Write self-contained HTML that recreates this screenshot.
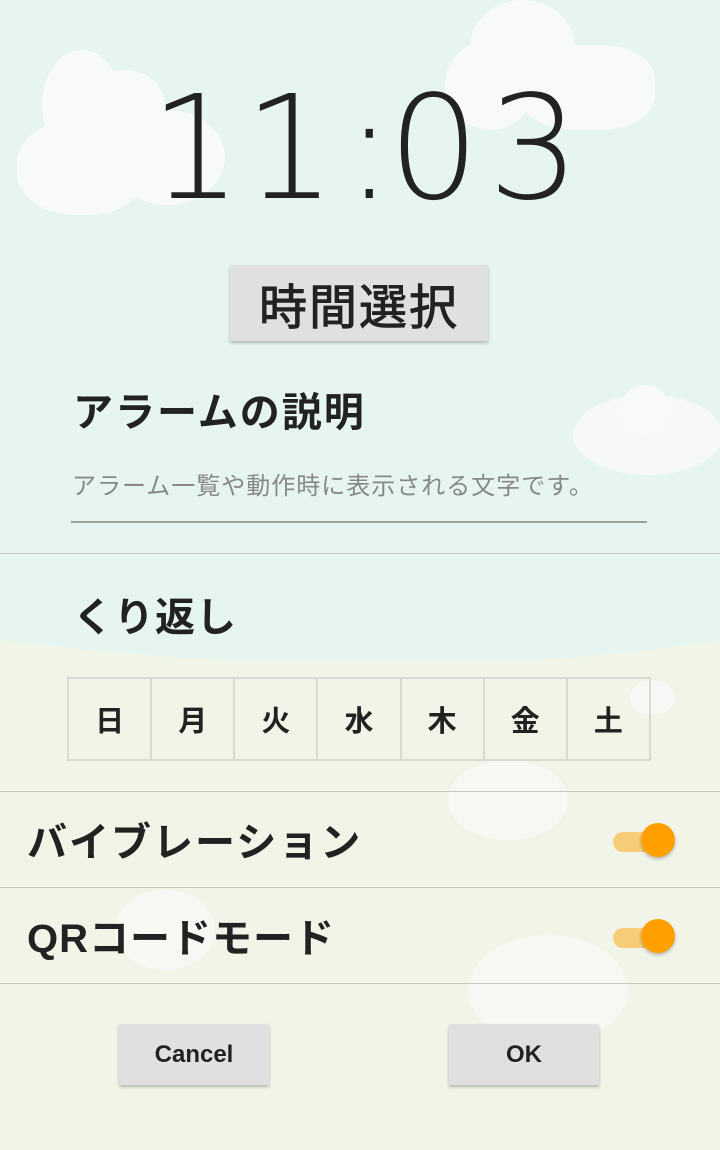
<!DOCTYPE html>
<html><head><meta charset="utf-8"><style>
*{margin:0;padding:0;box-sizing:border-box}
body{width:720px;height:1150px;overflow:hidden;position:relative;background:#f0f5e8;font-family:"Liberation Sans","Noto Sans CJK JP",sans-serif;color:#222}
.sky{position:absolute;left:0;top:0;width:720px;height:660px;background:#e6f5f0}
.c{position:absolute;background:#f8faf9;border-radius:50%}
.a{position:absolute}
.d{position:absolute;top:76px;font-size:144px;line-height:1;color:#222;font-family:"DejaVu Sans","Liberation Sans",sans-serif;font-weight:200}
.hr{position:absolute;left:0;width:720px;height:1px;background:#c4c9c2}
.btn{position:absolute;background:#e0e0e0;box-shadow:0 2px 3px rgba(0,0,0,.25);border-radius:2px;display:flex;align-items:center;justify-content:center;font-weight:bold}
.lbl{position:absolute;font-weight:bold;white-space:nowrap}
.grid{position:absolute;left:67px;top:677px;width:584px;height:84px;border:2px solid #d6dbd3;display:flex}
.grid div{flex:1;border-right:2px solid #d6dbd3;display:flex;align-items:center;justify-content:center;font-weight:bold;font-size:29px}
.grid div:last-child{border-right:none}
.tg{position:absolute;width:62px;height:34px}
.tg .t{position:absolute;left:0;top:9px;width:50px;height:20px;border-radius:10px;background:#f7cd7a}
.tg .k{position:absolute;right:0;top:0;width:34px;height:34px;border-radius:50%;background:#ff9f00;box-shadow:0 2px 3px rgba(0,0,0,.25)}
</style></head><body>
<div class="sky"></div>
<svg class="a" style="left:0;top:620px" width="720" height="60"><path d="M0 20 Q200 45 420 45 Q600 40 720 20 L720 60 L0 60Z" fill="#f0f5e8"/></svg>
<div class="c" style="left:17px;top:120px;width:130px;height:95px;border-radius:45%"></div>
<div class="c" style="left:42px;top:50px;width:80px;height:110px"></div>
<div class="c" style="left:85px;top:70px;width:80px;height:70px"></div>
<div class="c" style="left:110px;top:110px;width:115px;height:95px"></div>
<div class="c" style="left:445px;top:40px;width:90px;height:90px"></div>
<div class="c" style="left:470px;top:0px;width:105px;height:95px"></div>
<div class="c" style="left:520px;top:45px;width:135px;height:85px;border-radius:40%"></div>
<div class="c" style="left:573px;top:395px;width:150px;height:80px;opacity:.9"></div>
<div class="c" style="left:620px;top:385px;width:50px;height:50px"></div>
<div class="c" style="left:448px;top:760px;width:120px;height:80px;opacity:.7"></div>
<div class="c" style="left:468px;top:935px;width:160px;height:110px;opacity:.7"></div>
<div class="c" style="left:115px;top:890px;width:100px;height:80px;opacity:.7"></div>
<div class="c" style="left:630px;top:680px;width:45px;height:35px;opacity:.8"></div>
<div class="d" style="left:150px">1</div>
<div class="d" style="left:244px">1</div>
<div class="d" style="left:345px">:</div>
<div class="d" style="left:388px">0</div>
<div class="d" style="left:488px">3</div>
<div class="btn" style="left:230px;top:265px;width:258px;height:76px;font-size:48px;font-weight:normal;letter-spacing:2px;-webkit-text-stroke:1px #222">時間選択</div>
<div class="lbl" style="left:73px;top:380px;font-size:40px;letter-spacing:2px">アラームの説明</div>
<div class="a" style="left:72px;top:466px;font-size:24px;color:#888;letter-spacing:1px;white-space:nowrap">アラーム一覧や動作時に表示される文字です。</div>
<div class="a" style="left:71px;top:521px;width:576px;height:2px;background:#9aa39a"></div>
<div class="hr" style="top:553px"></div>
<div class="lbl" style="left:73px;top:585px;font-size:40px;letter-spacing:1px">くり返し</div>
<div class="grid"><div>日</div><div>月</div><div>火</div><div>水</div><div>木</div><div>金</div><div>土</div></div>
<div class="hr" style="top:791px"></div>
<div class="lbl" style="left:27px;top:810px;font-size:40px;letter-spacing:2px">バイブレーション</div>
<div class="tg" style="left:613px;top:823px"><div class="t"></div><div class="k"></div></div>
<div class="hr" style="top:887px"></div>
<div class="lbl" style="left:27px;top:906px;font-size:40px;letter-spacing:1px">QRコードモード</div>
<div class="tg" style="left:613px;top:919px"><div class="t"></div><div class="k"></div></div>
<div class="hr" style="top:983px"></div>
<div class="btn" style="left:119px;top:1024px;width:150px;height:61px;font-size:24px">Cancel</div>
<div class="btn" style="left:449px;top:1024px;width:150px;height:61px;font-size:24px">OK</div>
</body></html>
